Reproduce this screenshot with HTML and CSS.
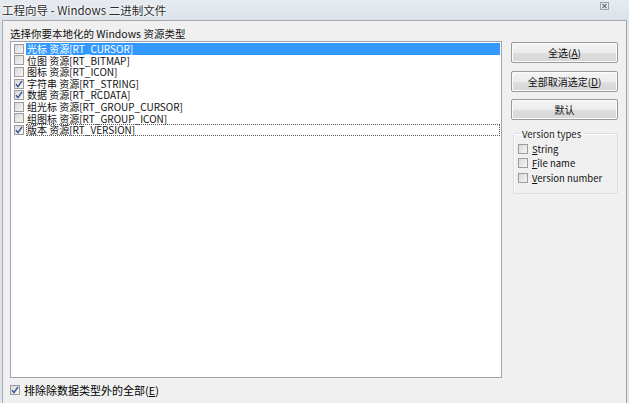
FILE: index.html
```html
<!DOCTYPE html>
<html lang="zh-CN">
<head>
<meta charset="utf-8">
<title>工程向导 - Windows 二进制文件</title>
<link rel="stylesheet" href="styles.css">
</head>
<body>
<div class="window">
  <div class="titlebar">
    <span class="title">工程向导 - Windows 二进制文件</span>
    <svg class="close" width="9" height="8" viewBox="0 0 9 8"><rect x="0.5" y="0.5" width="8" height="7" fill="#e6eaee" stroke="#9aa2ab"/><path d="M2.5 2 L6.5 6 M6.5 2 L2.5 6" stroke="#6d757e" stroke-width="1.2"/></svg>
  </div>
  <div class="panel">
    <div class="left">
      <div class="caption">选择你要本地化的 Windows 资源类型</div>
      <div class="listbox">
        <div class="item selected"><span class="cb"></span><span class="txt">光标 资源[RT_CURSOR]</span></div>
        <div class="item"><span class="cb"></span><span class="txt">位图 资源[RT_BITMAP]</span></div>
        <div class="item"><span class="cb"></span><span class="txt">图标 资源[RT_ICON]</span></div>
        <div class="item"><span class="cb checked"><svg width="8" height="8" viewBox="0 0 8 8"><path d="M1 4.2 L3 6.6 L7 0.8" fill="none" stroke="#35508f" stroke-width="1.4"/></svg></span><span class="txt">字符串 资源[RT_STRING]</span></div>
        <div class="item"><span class="cb checked"><svg width="8" height="8" viewBox="0 0 8 8"><path d="M1 4.2 L3 6.6 L7 0.8" fill="none" stroke="#35508f" stroke-width="1.4"/></svg></span><span class="txt">数据 资源[RT_RCDATA]</span></div>
        <div class="item"><span class="cb"></span><span class="txt">组光标 资源[RT_GROUP_CURSOR]</span></div>
        <div class="item"><span class="cb"></span><span class="txt">组图标 资源[RT_GROUP_ICON]</span></div>
        <div class="item focused"><span class="cb checked"><svg width="8" height="8" viewBox="0 0 8 8"><path d="M1 4.2 L3 6.6 L7 0.8" fill="none" stroke="#35508f" stroke-width="1.4"/></svg></span><span class="txt">版本 资源[RT_VERSION]</span></div>
      </div>
      <div class="exclude"><span class="cb checked"><svg width="8" height="8" viewBox="0 0 8 8"><path d="M1 4.2 L3 6.6 L7 0.8" fill="none" stroke="#35508f" stroke-width="1.4"/></svg></span><span>排除除数据类型外的全部(<u>E</u>)</span></div>
    </div>
    <div class="right">
      <div class="btn">全选(<u>A</u>)</div>
      <div class="btn">全部取消选定(<u>D</u>)</div>
      <div class="btn">默认</div>
      <fieldset class="group">
        <legend>Version types</legend>
        <div class="opt"><span class="cb"></span><span><u>S</u>tring</span></div>
        <div class="opt"><span class="cb"></span><span><u>F</u>ile name</span></div>
        <div class="opt"><span class="cb"></span><span><u>V</u>ersion number</span></div>
      </fieldset>
    </div>
  </div>
</div>
</body>
</html>
```
FILE: styles.css
```css
* { box-sizing: border-box; }
html, body {
  margin: 0;
  padding: 0;
}
body {
  width: 629px;
  height: 403px;
  overflow: hidden;
  background: #dfe5ec;
  font-family: "Noto Sans CJK SC", "Noto Sans", sans-serif;
  color: #000;
}
.window {
  width: 629px;
  height: 403px;
  display: flex;
  flex-direction: column;
}
.titlebar {
  height: 20px;
  display: flex;
  align-items: center;
  justify-content: space-between;
  padding: 0 20px 0 2px;
  background: linear-gradient(#e6ebf0, #dbe2e9);
}
.title {
  font-size: 11.5px;
  line-height: 14px;
  color: #2a2a2a;
  text-shadow: 0 0 6px #fff, 0 0 3px #fff, 0 0 1px #fff;
}
.close {
  margin-top: -8px;
  display: block;
}
.panel {
  flex: 1;
  margin-left: 2px;
  width: 625px;
  background: #f0f0f0;
  border: 1px solid #a3a8ae;
  border-bottom: none;
  display: flex;
  align-items: flex-start;
}
.left {
  margin-left: 7px;
  width: 492px;
  display: flex;
  flex-direction: column;
}
.caption {
  height: 20px;
  padding-top: 6px;
  font-size: 10.5px;
  line-height: 14px;
  color: #111;
}
.listbox {
  height: 337px;
  background: #fff;
  border: 1px solid #9ea3a8;
  padding: 1px 0 1px 0;
}
.item {
  height: 11.6px;
  display: flex;
  align-items: center;
  font-size: 10px;
  line-height: 11.6px;
  color: #111;
}
.cb {
  width: 10px;
  height: 10px;
  flex: none;
  border: 1px solid #9c9c9c;
  background: linear-gradient(135deg, #d9d9d9, #f6f6f6);
  display: flex;
  align-items: center;
  justify-content: center;
}
.cb svg { display: block; }
.item .cb { margin-left: 3px; }
.item .txt {
  flex: 1;
  margin-left: 2px;
  margin-right: 1px;
  padding-left: 1px;
  height: 11.6px;
  white-space: nowrap;
}
.item.selected .txt {
  background: #3399ff;
  color: #fff;
}
.item.focused .txt {
  outline: 1px dotted #555;
  outline-offset: -1px;
}
.exclude {
  margin-top: 6px;
  height: 12px;
  display: flex;
  align-items: center;
  gap: 4px;
  font-size: 11px;
  line-height: 12px;
}
.right {
  margin-left: 9px;
  width: 107px;
  padding-top: 21px;
  display: flex;
  flex-direction: column;
  gap: 7.5px;
}
.btn {
  height: 21px;
  border: 1px solid #9a9a9a;
  border-radius: 2px;
  background: linear-gradient(#f4f4f4 0%, #ececec 50%, #dedede 51%, #d6d6d6 100%);
  box-shadow: inset 0 0 0 1px #fbfbfb;
  font-size: 10px;
  line-height: 19px;
  text-align: center;
  color: #111;
}
.group {
  margin: 0 0 0 2px;
  padding: 2px 0 6px 4px;
  border: 1px solid #d5dfe5;
  border-radius: 3px;
  box-shadow: inset 1px 1px 0 #fff;
  min-width: 0;
  height: 66px;
}
.group legend {
  padding: 0 2px;
  margin-left: 2px;
  font-size: 9.5px;
  line-height: 12px;
  color: #1b1b1b;
}
.opt {
  height: 14.5px;
  display: flex;
  align-items: center;
  gap: 4px;
  font-size: 9.5px;
  line-height: 12px;
  color: #111;
}
```
